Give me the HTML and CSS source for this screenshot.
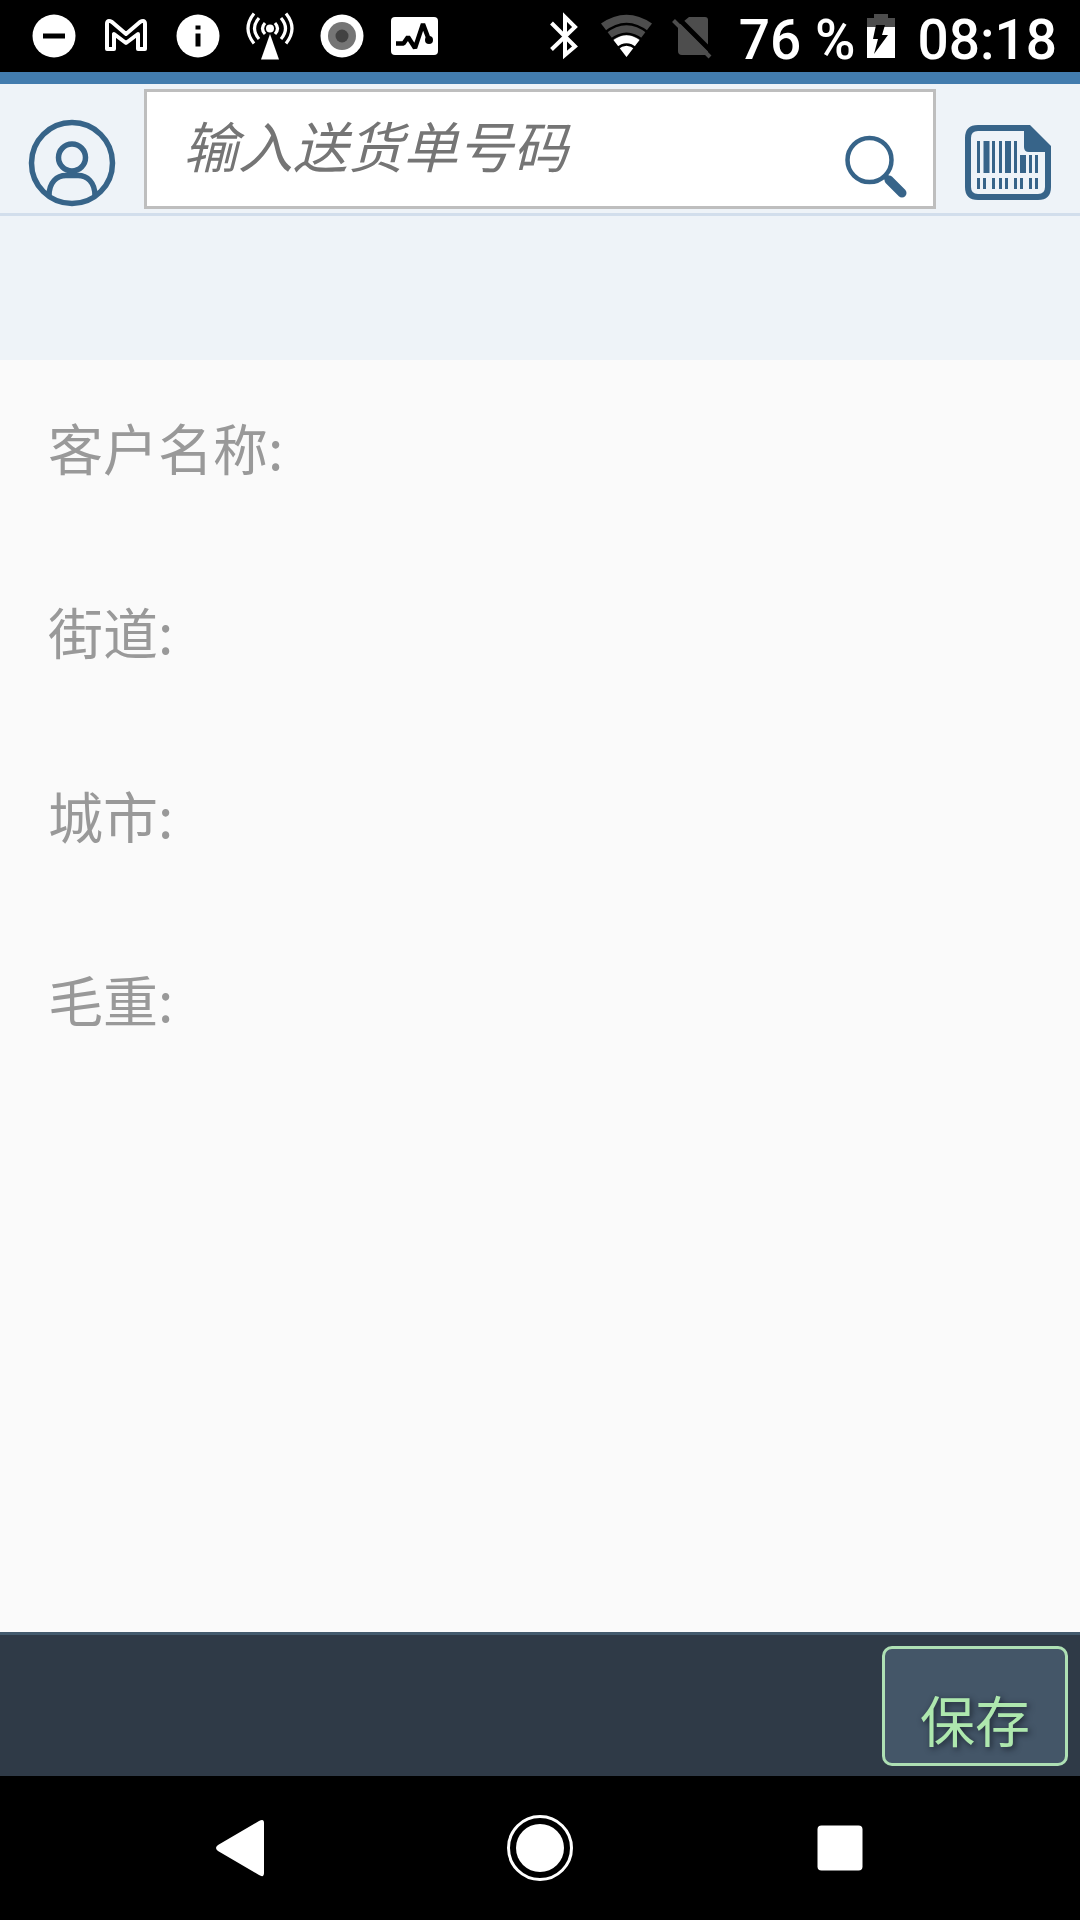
FILE: index.html
```
<!DOCTYPE html>
<html lang="zh-CN">
<head>
    <meta charset="UTF-8">
    <meta name="viewport" content="width=device-width, initial-scale=1.0">
    <title>送货单</title>
    <link rel="stylesheet" href="styles.css">
</head>
<body>
    <div class="status-bar">
        <div class="notifications">
            <svg viewBox="0 0 72 72"><circle cx="36" cy="36" r="21.500" fill="#fff"/><path d="M25 36h22" stroke="#000" stroke-width="5"/></svg>
            <svg viewBox="0 0 72 72"><path d="M17 49V24q0-5 5-2L36 34L50 22q5-3 5 2V49H48V34L36 43L24 34V49Z" fill="none" stroke="#fff" stroke-width="4" stroke-linejoin="round"/></svg>
            <svg viewBox="0 0 72 72"><circle cx="36" cy="36" r="21.500" fill="#fff"/><path d="M36 25.500v4M36 33.500v13" stroke="#000" stroke-width="5"/></svg>
            <svg viewBox="0 0 72 72"><circle cx="36" cy="28.500" r="4" fill="#fff"/><path d="M36 34L45 59.500H27Z" fill="#fff"/><path d="M31 23q-5 5.500 0 11M25 18q-9 10.500 0 21M20 13.500q-12 15 0 30M41 23q5 5.500 0 11M47 18q9 10.500 0 21M52 13.500q12 15 0 30" fill="none" stroke="#fff" stroke-width="3.200"/></svg>
            <svg viewBox="0 0 72 72"><circle cx="36" cy="36" r="21.500" fill="#fff"/><circle cx="36" cy="36" r="14" fill="#757575"/><circle cx="36" cy="36" r="6.500" fill="#424242"/></svg>
            <svg viewBox="0 0 72 72"><rect x="13" y="17" width="47" height="38" rx="4" fill="#fff"/><path d="M18 43.500h7.500L30 37L37 48L45 24L51 40" fill="none" stroke="#000" stroke-width="4.500" stroke-linejoin="bevel"/><circle cx="51" cy="40" r="4" fill="#000"/></svg>
        </div>
        <div class="system">
            <svg class="signal" viewBox="0 0 64 72"><path d="M19.500 23L43 46.500L33 55V17L43 27L19.500 49.500" fill="none" stroke="#fff" stroke-width="4"/></svg>
            <svg class="signal" viewBox="0 0 64 72"><path d="M30.500 57L5 23.500Q30.500 6 56 23.500Z" fill="#4d4d4d"/><path d="M30.500 57L17.500 40Q30.500 30.500 43.500 40Z" fill="#fff"/><path d="M9 32.500Q30.500 15.500 52 32.500M14.500 40Q30.500 27.500 46.500 40M21 48.500Q30.500 40.500 40 48.500" fill="none" stroke="#000" stroke-width="2.500"/></svg>
            <svg class="signal" viewBox="0 0 64 72"><path d="M29 17h16q3 0 3 3v32q0 3-3 3H22q-4 0-4-4V26Z" fill="#4d4d4d"/><path d="M17 17L54 54" stroke="#000" stroke-width="5"/><path d="M13.500 20.500L50 57" stroke="#4d4d4d" stroke-width="4"/></svg>
            <span class="charge">76 %</span>
            <svg class="battery" viewBox="0 0 28 72"><path d="M0 27V18H7V14H21V18H28V27Z" fill="#4d4d4d"/><path d="M0 27H28V58H0Z" fill="#fff"/><path d="M9 25H18L15 35H21L7 54L11 39H6Z" fill="#000"/></svg>
            <span class="clock">08:18</span>
        </div>
    </div>

    <header class="header">
        <button class="icon-button" type="button" aria-label="用户">
            <svg viewBox="0 0 96 96" fill="none" stroke="#376489" stroke-width="5.500"><circle cx="48" cy="50" r="40.500"/><circle cx="48" cy="44.500" r="13.500"/><path d="M25 83C25 69 33 62.500 42 62.500H54C63 62.500 71 69 71 83"/></svg>
        </button>
        <form class="search">
            <input type="text" class="search-input" placeholder="输入送货单号码" aria-label="输入送货单号码" spellcheck="false">
            <button class="search-button" type="button" aria-label="搜索">
                <svg viewBox="0 0 64 64" fill="none" stroke="#376489"><circle cx="25.500" cy="26" r="22" stroke-width="4.500"/><path d="M41 42L45 46" stroke-width="6"/><path d="M45 46L58 59" stroke-width="9" stroke-linecap="round"/></svg>
            </button>
        </form>
        <button class="icon-button" type="button" aria-label="扫描条码">
            <svg viewBox="0 0 96 96">
                <path d="M68 15H18Q8 15 8 25V74Q8 84 18 84H78Q88 84 88 74V36" fill="none" stroke="#376489" stroke-width="6"/>
                <path d="M64 12H70L91 33V39H69Q64 39 64 34Z" fill="#376489"/>
                <path d="M18.500 28v32M33.500 28v32M40.500 28v32M55.500 28v32M70.500 42v18M76.500 42v18M18.500 65v11M24.500 65v11M33.500 65v11M40.500 65v11M46.500 65v11M55.500 65v11M61.500 65v11M70.500 65v11M76.500 65v11" stroke="#376489" stroke-width="3"/>
                <path d="M26.500 28v32M48 28v32M63 42v18" stroke="#376489" stroke-width="6"/>
            </svg>
        </button>
    </header>

    <div class="banner"></div>

    <main class="details">
        <p>客户名称:</p>
        <p>街道:</p>
        <p>城市:</p>
        <p>毛重:</p>
    </main>

    <footer class="footer">
        <button class="save-button" type="button">保存</button>
    </footer>

    <nav class="nav-bar">
        <button type="button" aria-label="返回">
            <svg viewBox="0 0 72 72"><path d="M14 33L55 9Q60 6 60 11V61Q60 66 55 63L14 39Q10 36 14 33Z" fill="#fff"/></svg>
        </button>
        <button type="button" aria-label="主页">
            <svg viewBox="0 0 72 72"><circle cx="36" cy="36" r="31.500" fill="none" stroke="#fff" stroke-width="3"/><circle cx="36" cy="36" r="24" fill="#fff"/></svg>
        </button>
        <button type="button" aria-label="最近任务">
            <svg viewBox="0 0 72 72"><rect x="13.500" y="13.500" width="45" height="45" rx="4" fill="#fff"/></svg>
        </button>
    </nav>
</body>
</html>
```
FILE: styles.css
```
* {
    box-sizing: border-box;
}

body {
    margin: 0;
    min-height: 100vh;
    display: flex;
    flex-direction: column;
    background: #fafafa;
    font-family: "Noto Sans CJK SC", sans-serif;
    font-size: 55px;
}

button {
    border: 0;
    padding: 0;
    background: none;
    font: inherit;
    cursor: pointer;
}

svg {
    display: block;
    flex: none;
}

/* android status bar */
.status-bar {
    display: flex;
    justify-content: space-between;
    height: 72px;
    padding: 0 23px 0 18px;
    background: #000;
    color: #fff;
    font-family: Roboto, sans-serif;
    font-weight: 500;
    line-height: 80px;
    white-space: nowrap;
}

.notifications,
.system {
    display: flex;
}

.notifications svg {
    width: 72px;
    height: 72px;
}

.signal {
    width: 64px;
    height: 72px;
}

.charge {
    margin-left: 15px;
}

.battery {
    width: 28px;
    height: 72px;
    margin: 0 22px 0 12px;
}

/* search header */
.header {
    display: flex;
    align-items: flex-end;
    padding: 5px 0 4px;
    background: #eef3f8;
    border-top: 12px solid #427cae;
    border-bottom: 3px solid #d2deec;
}

.icon-button {
    width: 144px;
}

.icon-button svg {
    width: 96px;
    height: 96px;
    margin: 0 auto;
}

.search {
    flex: 1;
    display: flex;
    align-items: flex-end;
    min-width: 0;
    height: 120px;
    background: #fff;
    border: 3px solid #bebebe;
}

.search-input {
    flex: 1;
    min-width: 0;
    height: 100%;
    padding: 0 0 10px 36px;
    border: 0;
    outline: 0;
    background: none;
    color: #333;
    font: inherit;
    font-style: italic;
}

.search-input::placeholder {
    color: #757575;
}

.search-button {
    margin: 0 25px 8px 0;
}

.search-button svg {
    width: 64px;
    height: 64px;
}

.banner {
    height: 144px;
    background: #eef3f8;
}

/* delivery details */
.details {
    flex: 1;
    padding: 46px 48px;
    color: #999;
}

.details p {
    margin: 0 0 104px;
    line-height: 80px;
}

.details p:last-child {
    margin-bottom: 0;
}

.footer {
    display: flex;
    justify-content: flex-end;
    padding: 11px 12px 10px;
    background: #2f3a47;
    border-top: 3px solid #435a6d;
}

.save-button {
    height: 120px;
    padding: 24px 35px 0;
    border: 3px solid #aee0b4;
    border-radius: 10px;
    background: #445668;
    color: #aee8ae;
    line-height: 80px;
    text-shadow: 2px 2px 6px #1c2530;
}

/* android navigation */
.nav-bar {
    display: flex;
    justify-content: center;
    padding: 36px 90px;
    background: #000;
}

.nav-bar button {
    flex: 1;
}

.nav-bar svg {
    width: 72px;
    height: 72px;
    margin: 0 auto;
}
```
